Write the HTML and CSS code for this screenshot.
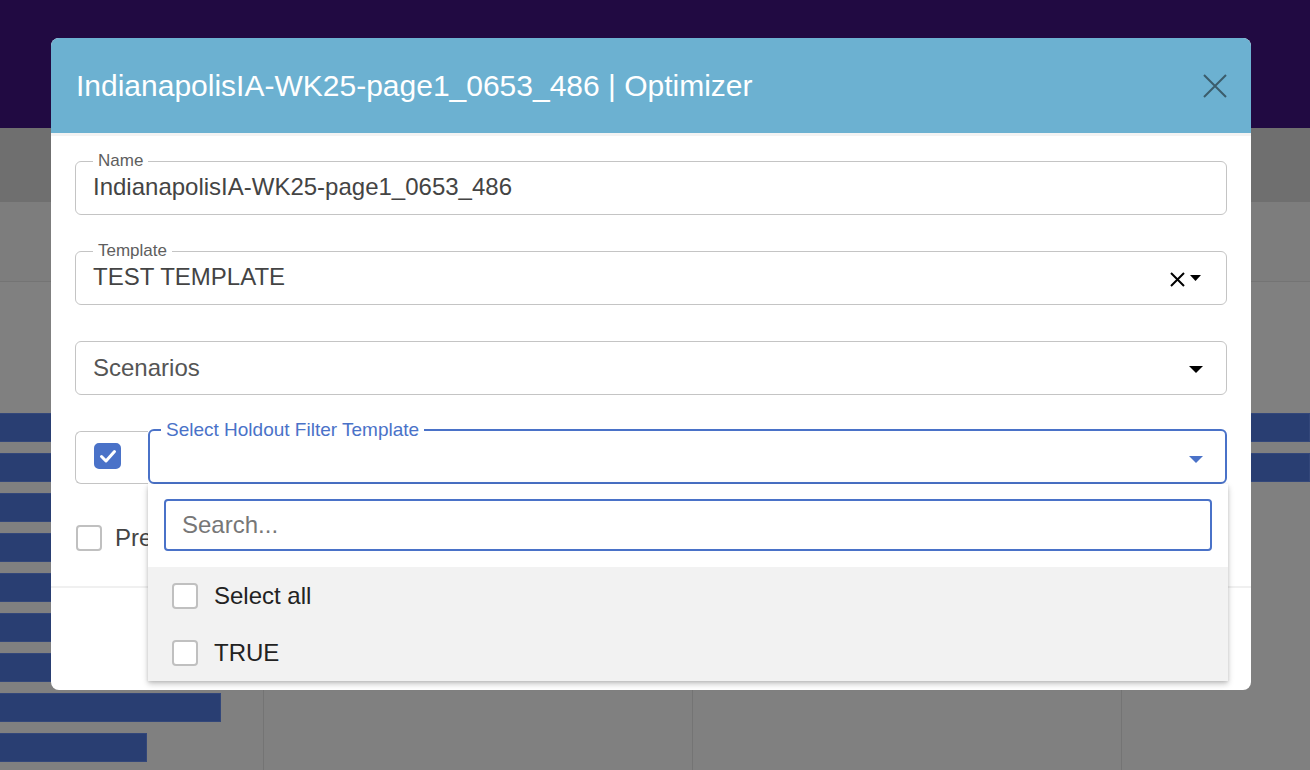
FILE: index.html
```html
<!DOCTYPE html>
<html>
<head>
<meta charset="utf-8">
<title>Optimizer</title>
<link rel="stylesheet" href="styles.css">
</head>
<body>
<div class="page">
  <div class="topbar"></div>
  <div class="band band-a"></div>
  <div class="band band-b"></div>
  <div class="chart">
    <div class="bar bar-full"></div>
    <div class="bar bar-full"></div>
    <div class="bar bar-mid"></div>
    <div class="bar bar-mid"></div>
    <div class="bar bar-mid"></div>
    <div class="bar bar-mid"></div>
    <div class="bar bar-mid"></div>
    <div class="bar bar-short"></div>
    <div class="bar bar-shorter"></div>
  </div>
</div>

<div class="modal">
  <div class="modal-header">
    <h1 class="modal-title">IndianapolisIA-WK25-page1_0653_486 | Optimizer</h1>
    <svg class="close-icon" width="24" height="24" viewBox="0 0 24 24"><path d="M1 1 L23 23 M23 1 L1 23" stroke="#3b5c6b" stroke-width="2" fill="none"/></svg>
  </div>
  <div class="modal-body">
    <fieldset class="field">
      <legend>Name</legend>
      <div class="value">IndianapolisIA-WK25-page1_0653_486</div>
    </fieldset>

    <fieldset class="field field-template">
      <legend>Template</legend>
      <div class="value-row">
        <div class="value">TEST TEMPLATE</div>
        <div class="icons">
          <svg width="15" height="15" viewBox="0 0 15 15"><path d="M1 1 L14 14 M14 1 L1 14" stroke="#000" stroke-width="2" fill="none"/></svg>
          <svg class="caret-small" width="11" height="6" viewBox="0 0 11 6"><path d="M0 0 H11 L5.5 6 Z" fill="#000"/></svg>
        </div>
      </div>
    </fieldset>

    <div class="select-plain">
      <span class="placeholder">Scenarios</span>
      <svg width="14" height="7" viewBox="0 0 14 7"><path d="M0 0 H14 L7 7 Z" fill="#000"/></svg>
    </div>

    <div class="holdout-row">
      <div class="check-cell">
        <span class="checkbox checked">
          <svg width="22" height="22" viewBox="0 0 22 22"><path d="M4.5 11.5 L9 16 L17.5 6.5" stroke="#fff" stroke-width="3" fill="none" stroke-linecap="round" stroke-linejoin="round"/></svg>
        </span>
      </div>
      <div class="holdout-wrap">
        <fieldset class="holdout">
          <legend>Select Holdout Filter Template</legend>
          <div class="holdout-body">
            <svg width="14" height="7" viewBox="0 0 14 7"><path d="M0 0 H14 L7 7 Z" fill="#4a72c8"/></svg>
          </div>
        </fieldset>
        <div class="dropdown">
          <div class="search">Search...</div>
          <ul class="options">
            <li class="option"><span class="checkbox"></span><span>Select all</span></li>
            <li class="option"><span class="checkbox"></span><span>TRUE</span></li>
          </ul>
        </div>
      </div>
    </div>

    <div class="pre-row">
      <span class="checkbox"></span>
      <span class="pre-label">Preview</span>
    </div>

    <div class="footer"></div>
  </div>
</div>
</body>
</html>
```

FILE: styles.css
```css
* { box-sizing: border-box; }

html, body {
  margin: 0;
  padding: 0;
}

body {
  width: 1310px;
  height: 770px;
  overflow: hidden;
  font-family: "Liberation Sans", Arial, Helvetica, sans-serif;
  background: #808080;
  position: relative;
}

/* dimmed page behind the modal */
.page {
  display: flex;
  flex-direction: column;
  height: 770px;
}

.topbar {
  height: 128px;
  background: #210a42;
}

.band-a {
  height: 74px;
  background: #6f6f6f;
}

.band-b {
  height: 80px;
  background: #7d7d7d;
  border-bottom: 1px solid #747474;
}

.chart {
  flex: 1;
  padding-top: 131px;
  background:
    linear-gradient(#747474, #747474) 263px 0 / 1px 100% no-repeat,
    linear-gradient(#747474, #747474) 692px 0 / 1px 100% no-repeat,
    linear-gradient(#747474, #747474) 1121px 0 / 1px 100% no-repeat,
    #808080;
  display: flex;
  flex-direction: column;
  gap: 11px;
}

.bar {
  height: 29px;
  background: #293e72;
  border: 1px solid #33477a;
  border-left: none;
}

.bar-full { width: 100%; }
.bar-mid { width: 600px; }
.bar-short { width: 221px; }
.bar-shorter { width: 147px; }

/* modal */
.modal {
  position: absolute;
  left: 51px;
  top: 38px;
  width: 1200px;
  height: 652px;
  background: #fff;
  border-radius: 8px;
}

.modal-header {
  height: 98px;
  background: #6cb1d1;
  border-radius: 8px 8px 0 0;
  border-bottom: 3px solid #f3f3f3;
  display: flex;
  align-items: center;
  justify-content: space-between;
  padding: 0 24px 0 25px;
}

.modal-title {
  margin: 0;
  font-size: 30px;
  font-weight: 400;
  color: #fff;
  line-height: 36px;
}

.close-icon { display: block; }

.modal-body {
  padding: 15px 24px 0;
  display: flex;
  flex-direction: column;
}

.field {
  margin: 0;
  padding: 0 17px 13px;
  border: 1px solid #c4c4c4;
  border-radius: 6px;
  min-width: 0;
}

.field legend {
  padding: 0 5px;
  font-size: 17px;
  line-height: 20px;
  color: #5e5e5e;
}

.value {
  font-size: 24px;
  line-height: 28px;
  padding-top: 2px;
  color: #444;
}

.field-template {
  margin-top: 26px;
}

.value-row {
  display: flex;
  align-items: center;
}

.value-row .value { flex: 1; }

.icons {
  display: flex;
  align-items: center;
  gap: 5px;
  margin-right: 8px;
  padding-top: 6px;
}

.icons svg { display: block; }
.caret-small { margin-top: -3px; }

.select-plain {
  margin-top: 36px;
  height: 54px;
  border: 1px solid #c4c4c4;
  border-radius: 6px;
  display: flex;
  align-items: center;
  justify-content: space-between;
  padding: 0 23px 0 17px;
}

.placeholder {
  font-size: 24px;
  color: #555;
}

.select-plain svg { display: block; margin-top: 2px; }

.holdout-row {
  margin-top: 25px;
  display: flex;
  align-items: flex-end;
}

.check-cell {
  width: 73px;
  height: 53px;
  border: 1px solid #c4c4c4;
  border-right: none;
  border-radius: 6px 0 0 6px;
  display: flex;
  align-items: center;
  padding-left: 18px;
}

.checkbox {
  width: 26px;
  height: 26px;
  border: 2px solid #c0c0c0;
  border-radius: 4px;
  background: #fff;
  display: flex;
  align-items: center;
  justify-content: center;
  flex: none;
}

.checkbox.checked {
  width: 27px;
  background: #4a72c8;
  border-color: #4a72c8;
  border-radius: 5px;
  margin-top: -3px;
}

.checkbox svg { display: block; }

.holdout-wrap {
  flex: 1;
  position: relative;
}

.holdout {
  margin: 0;
  height: 64px;
  padding: 0 13px;
  border: 2px solid #4a72c8;
  border-radius: 6px;
  min-width: 0;
}

.holdout legend {
  padding: 0 5px;
  margin-left: -2px;
  font-size: 19px;
  line-height: 20px;
  color: #4a72c8;
}

.holdout-body {
  height: 38px;
  display: flex;
  align-items: center;
  justify-content: flex-end;
  padding-right: 9px;
}

.holdout-body svg { display: block; }

.dropdown {
  position: absolute;
  top: 100%;
  left: 0;
  right: -1px;
  background: #fff;
  box-shadow: 0 3px 6px rgba(0, 0, 0, 0.22), 0 1px 3px rgba(0, 0, 0, 0.1);
  padding: 15px 16px 0;
  z-index: 2;
}

.search {
  height: 52px;
  border: 2px solid #4a72c8;
  border-radius: 4px;
  padding: 0 16px;
  display: flex;
  align-items: center;
  font-size: 24px;
  color: #777;
}

.options {
  list-style: none;
  margin: 16px -16px 0;
  padding: 0;
  background: #f2f2f2;
}

.option {
  height: 57px;
  display: flex;
  align-items: center;
  gap: 16px;
  padding-left: 24px;
  font-size: 24px;
  color: #222;
}

.pre-row {
  margin-top: 40px;
  display: flex;
  align-items: center;
  gap: 13px;
  padding-left: 1px;
}

.pre-label {
  font-size: 24px;
  color: #444;
}

.footer {
  margin: 34px -24px 0;
  border-top: 2px solid #f0f0f0;
}
```
